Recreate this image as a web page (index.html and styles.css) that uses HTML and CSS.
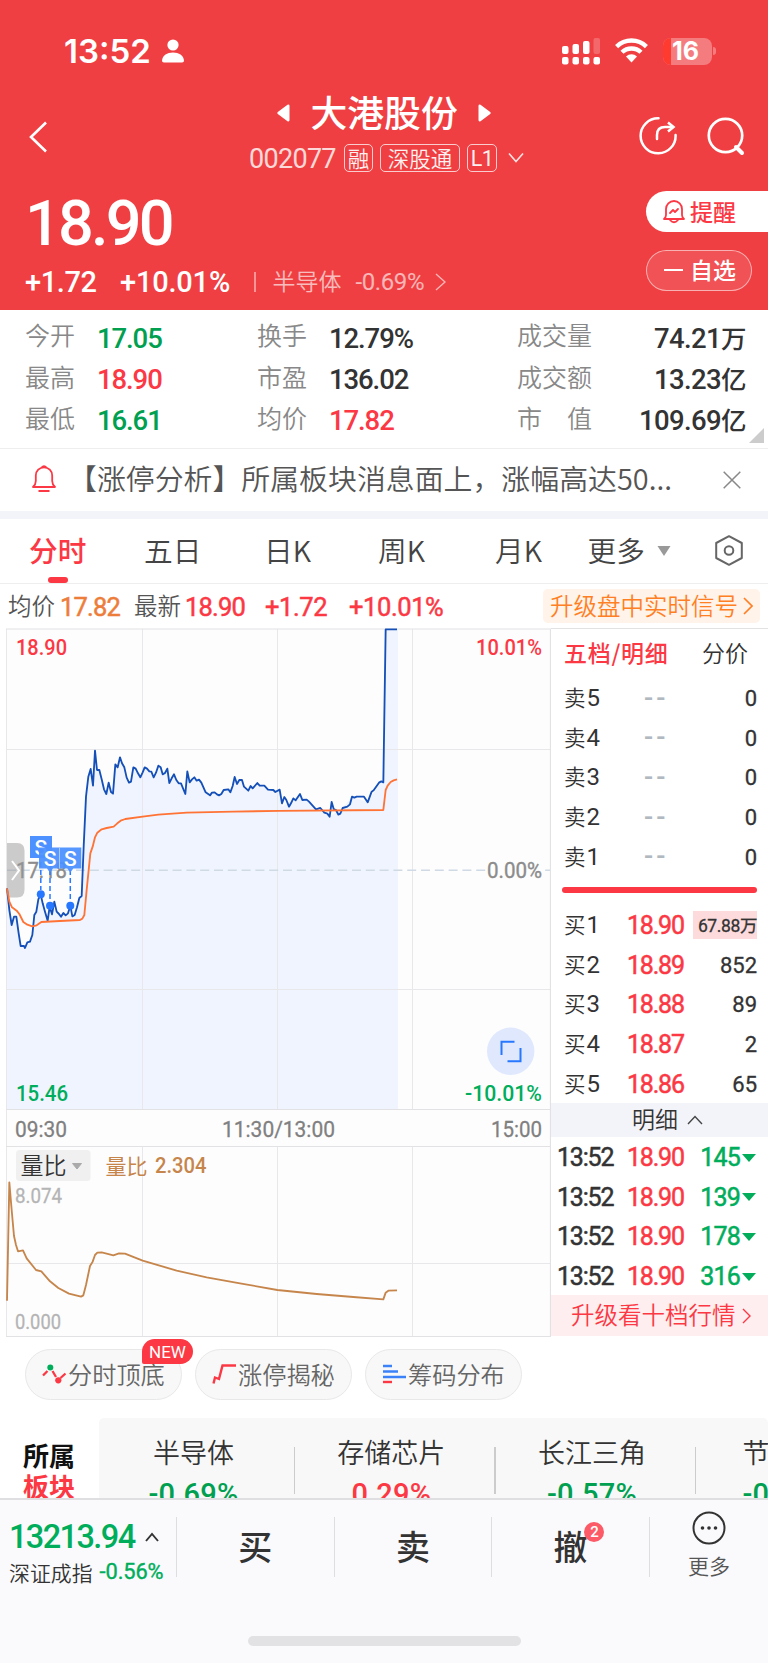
FILE: index.html
```html
<!DOCTYPE html>
<html lang="zh-CN">
<head>
<meta charset="utf-8">
<title>大港股份 002077</title>
<link rel="stylesheet" href="styles.css">
</head>
<body>
<div class="screen">
  <header class="hero">
    <div class="status">
      <span class="clock">13:52</span>
      <svg class="person" width="22" height="24" viewBox="0 0 22 24"><circle cx="11" cy="6" r="5.6"/><path d="M0 21.5C.6 16.500 5 13.600 11 13.600s10.400 2.900 11 7.900c0 1.300-.8 1.900-2 1.900H2c-1.200 0-2-.6-2-1.900z"/></svg>
      <svg class="signal" width="39" height="27" viewBox="0 0 39 27"><g fill="#fff"><rect x="0" y="8" width="6.500" height="8" rx="2"/><rect x="10.500" y="6" width="6.500" height="10" rx="2"/><rect x="21" y="3" width="6.500" height="13" rx="2"/><rect x="0" y="19" width="6.500" height="7.500" rx="2"/><rect x="10.500" y="19" width="6.500" height="7.500" rx="2"/><rect x="21" y="19" width="6.500" height="7.500" rx="2"/><rect x="31.500" y="19" width="6.500" height="7.500" rx="2"/></g><rect x="31.500" y="0" width="6.500" height="16" rx="2" fill="#fff" opacity=".22"/></svg>
      <svg class="wifi" width="33" height="25" viewBox="0 0 33 25"><g fill="none" stroke="#fff" stroke-width="4.400"><path d="M1.600 8.600a21.400 21.400 0 0 1 29.800 0"/><path d="M7 14.300a13.600 13.600 0 0 1 19 0"/></g><path d="M11 18.500a8 8 0 0 1 11 0l-5.500 6z" fill="#fff"/></svg>
      <span class="battery"><span class="battery-level"></span><span class="battery-num">16</span></span>
      <span class="battery-tip"></span>
    </div>
    <div class="nav">
      <svg class="back" width="20" height="34" viewBox="0 0 20 34"><path d="M18 2.500 3 17l15 14.500" fill="none" stroke="#fff" stroke-width="2.600"/></svg>
      <div class="title-block">
        <div class="title-row">
          <svg width="13" height="18" viewBox="0 0 13 18"><path d="M.8 8 10.500.8Q12.500 0 12.500 2v14q0 2-2 1.200L.8 10q-1-1 0-2z" fill="#fff"/></svg>
          <h1>大港股份</h1>
          <svg width="13" height="18" viewBox="0 0 13 18"><path d="M12.200 8 2.500.8Q.5 0 .5 2v14q0 2 2 1.200l9.700-7.200q1-1 0-2z" fill="#fff"/></svg>
        </div>
        <div class="code-row">
          <span class="code num">002077</span><span class="tag t1">融</span><span class="tag t2">深股通</span><span class="tag t3">L1</span>
          <svg width="16" height="12" viewBox="0 0 16 12"><path d="m1 1.500 7 8 7-8" fill="none" stroke="#fff" stroke-opacity=".85" stroke-width="1.600"/></svg>
        </div>
      </div>
      <svg class="share" width="38" height="38" viewBox="0 0 38 38"><g fill="none" stroke="#fff" stroke-width="2.500"><path d="M19.500 1.300A17.500 17.500 0 1 0 36.600 18" stroke-linecap="round"/><path d="M18 22v-4q0-8 8-8h7" stroke-linecap="round"/><path d="m29 5.500 5.500 4.500-5.500 4.500"/></g></svg>
      <svg class="search" width="38" height="40" viewBox="0 0 38 40"><circle cx="18.500" cy="18.500" r="16.700" fill="none" stroke="#fff" stroke-width="2.700"/><path d="m29 30 6 6" stroke="#fff" stroke-width="4" stroke-linecap="round"/></svg>
    </div>
    <div class="price-area">
      <div class="price-col">
        <div class="price num">18.90</div>
        <div class="change-row">
          <span class="chg num">+1.72</span><span class="pct num">+10.01%</span><i class="bar"></i><span class="industry">半导体</span><span class="ind-pct num">-0.69%</span>
          <svg width="11" height="18" viewBox="0 0 11 18"><path d="m1 1 9 8-9 8" fill="none" stroke="#fff" stroke-opacity=".62" stroke-width="1.400"/></svg>
        </div>
      </div>
      <div class="actions">
        <div class="remind"><svg width="22" height="24" viewBox="0 0 22 24"><g fill="none" stroke="#fb3844" stroke-width="1.800" stroke-linejoin="round"><path d="M1 19q2-1.600 2-4V9a8 8 0 0 1 16 0v6q0 2.400 2 4z"/><path d="M7 20q4 4.500 8 0M7 13l3-3 2 2 3-3" stroke-linecap="round"/></g></svg><span>提醒</span></div>
        <div class="watch"><i></i><span>自选</span></div>
      </div>
    </div>
  </header>

  <section class="quotes">
    <span class="lab">今开</span><b class="num down">17.05</b><span class="lab">换手</span><b class="num">12.79%</b><span class="lab">成交量</span><b class="num r">74.21<em>万</em></b>
    <span class="lab">最高</span><b class="num up">18.90</b><span class="lab">市盈</span><b class="num">136.02</b><span class="lab">成交额</span><b class="num r">13.23<em>亿</em></b>
    <span class="lab">最低</span><b class="num down">16.61</b><span class="lab">均价</span><b class="num up">17.82</b><span class="lab">市　值</span><b class="num r">109.69<em>亿</em></b>
    <i class="corner"></i>
  </section>

  <section class="news">
    <svg class="bell" width="24" height="28" viewBox="0 0 24 28"><g fill="none" stroke="#fb3844" stroke-width="1.800" stroke-linejoin="round"><path d="M1 22q2.800-2.600 2.800-6v-5.500a8.200 8.200 0 0 1 16.400 0V16q0 3.400 2.800 6z"/><path d="M9.500 2.500q2.500-2.600 5 0M6.500 26h11"/></g></svg>
    <span class="news-text">【涨停分析】所属板块消息面上，涨幅高达50...</span>
    <svg width="18" height="18" viewBox="0 0 18 18"><path d="m.7.7 16.600 16.600M17.300.7.700 17.300" stroke="#888" stroke-width="1.500"/></svg>
  </section>

  <nav class="tabs">
    <span class="tab active">分时</span><span class="tab t-5">五日</span><span class="tab t-d">日K</span><span class="tab t-w">周K</span><span class="tab t-m">月K</span><span class="tab t-more">更多</span>
    <svg class="drop" width="14" height="10" viewBox="0 0 14 10"><path d="M.5 0h13L7 10z" fill="#999"/></svg>
    <svg width="28" height="31" viewBox="0 0 28 31"><g fill="none" stroke="#666" stroke-width="2" stroke-linejoin="round"><path d="M14 1.200 26.800 8v15L14 29.800 1.200 23V8z"/><circle cx="14" cy="15.500" r="4.300"/></g></svg>
  </nav>

  <div class="strip">
    <span class="s-lab">均价</span><span class="num s-avg">17.82</span><span class="s-lab s-new">最新</span><span class="num s-last">18.90</span><span class="num s-chg">+1.72</span><span class="num s-pct">+10.01%</span>
    <span class="signal-link">升级盘中实时信号<svg width="10" height="20" viewBox="0 0 10 20"><path d="m1 2 8 8-8 8" fill="none" stroke="#ff7f24" stroke-width="1.700"/></svg></span>
  </div>

  <main class="board">
    <svg class="chart" width="551" height="709" viewBox="0 628 551 709">
      <path d="M7 629h543v708H7z" fill="#fdfdfe"/>
      <g transform="translate(0 620) scale(.33333)">
        <path class="area" d="M21 805 28 870 35 915 42 890 49 890 56 940 62 978 72 978 75 984 82 967 90 965 97 945 103 885 109 875 115 838 122 823 128 850 135 875 143 902 149 860 156 883 163 845 170 875 177 882 183 890 190 879 197 886 204 880 211 857 217 889 224 885 231 862 238 834 245 828 251 680 258 530 265 470 272 447 279 497 285 392 291 450 298 450 305 478 312 508 319 522 326 488 333 516 339 521 346 433 353 442 360 412 366 430 373 442 380 473 387 488 393 485 400 442 407 446 414 460 421 472 428 457 434 442 441 446 448 454 461 472 475 437 482 442 488 463 502 446 508 489 522 463 536 490 543 490 556 522 562 454 569 487 583 472 604 488 617 517 630 526 644 517 657 526 671 510 685 508 691 517 704 471 711 492 726 480 732 500 745 512 772 489 804 509 839 516 846 560 900 522 948 568 989 590 1028 564 1056 530 1103 547 1144 484 1150 487 1157 28H1194V1468H21z"/>
      </g>
      <g class="grid">
        <path d="M6.500 629V1337M142.500 629v480M277.500 629v480M412.500 629v480M142.500 1146v190M277.500 1146v190M412.500 1146v190"/>
        <path d="M6 749.500h544M6 989.500h544M6 1263.500h544"/>
        <path class="frame" d="M6 629h545M6 1109.500h544M6 1146.500h544M6 1336.500h544M550.500 629v708"/>
      </g>
      <path d="M7 870.300H550" stroke="#d0dae4" stroke-width="1.400" stroke-dasharray="9 4.800"/>
      <rect x="486" y="860" width="57" height="20" fill="#fdfdfe"/>
      <g class="labels">
        <text class="up" x="16" y="654.500" textLength="51" lengthAdjust="spacingAndGlyphs">18.90</text>
        <text class="up" x="476" y="654.500" textLength="66" lengthAdjust="spacingAndGlyphs">10.01%</text>
        <text class="mute" x="16" y="878" textLength="51" lengthAdjust="spacingAndGlyphs">17.18</text>
        <text class="mute" x="487" y="878" textLength="55" lengthAdjust="spacingAndGlyphs">0.00%</text>
        <text class="down" x="16" y="1101" textLength="52" lengthAdjust="spacingAndGlyphs">15.46</text>
        <text class="down" x="465" y="1101" textLength="77" lengthAdjust="spacingAndGlyphs">-10.01%</text>
        <text class="time" x="15" y="1137" textLength="52" lengthAdjust="spacingAndGlyphs">09:30</text>
        <text class="time" x="222" y="1137" textLength="113" lengthAdjust="spacingAndGlyphs">11:30/13:00</text>
        <text class="time" x="491" y="1137" textLength="51" lengthAdjust="spacingAndGlyphs">15:00</text>
        <text class="scale" x="15" y="1203" textLength="47" lengthAdjust="spacingAndGlyphs">8.074</text>
        <text class="scale" x="15" y="1328.500" textLength="46" lengthAdjust="spacingAndGlyphs">0.000</text>
        <rect x="16" y="1150" width="74.500" height="31" rx="3.500" fill="#f0f0f0"/>
        <text class="ratio-name" x="20.500" y="1173.500">量比</text>
        <path d="M72.500 1163.500h9l-4.500 5.500z" fill="#aaa" stroke="#aaa"/>
        <text class="ratio-cn" x="105.500" y="1173.500">量比</text>
        <text class="ratio-val" x="155" y="1173" textLength="51.500" lengthAdjust="spacingAndGlyphs">2.304</text>
      </g>
      <path d="M7 843h10q7.500 0 7.500 7.500v39q0 8-7.500 8H7z" fill="#999" fill-opacity=".5"/>
      <path d="m12 861 7 9.500-7 9.500" fill="none" stroke="#fff" stroke-width="2"/>
      <g transform="translate(0 620) scale(.33333)">
        <path class="line price-line" d="M21 805 28 870 35 915 42 890 49 890 56 940 62 978 72 978 75 984 82 967 90 965 97 945 103 885 109 875 115 838 122 823 128 850 135 875 143 902 149 860 156 883 163 845 170 875 177 882 183 890 190 879 197 886 204 880 211 857 217 889 224 885 231 862 238 834 245 828 251 680 258 530 265 470 272 447 279 497 285 392 291 450 298 450 305 478 312 508 319 522 326 488 333 516 339 521 346 433 353 442 360 412 366 430 373 442 380 473 387 488 393 485 400 442 407 446 414 460 421 472 428 457 434 442 441 446 448 454 454 455 461 472 468 458 475 437 482 442 488 463 495 459 502 446 508 489 515 475 522 463 529 480 536 490 543 490 556 522 562 454 569 487 576 478 583 472 590 482 597 479 604 488 617 517 630 526 636 518 644 517 651 523 657 526 664 522 671 510 685 508 691 517 698 498 704 471 711 492 718 480 726 480 732 500 745 512 752 498 758 505 772 489 779 497 793 497 804 509 820 510 826 516 839 509 846 550 853 531 859 540 867 560 873 550 880 535 887 541 900 522 907 540 920 539 927 545 948 568 961 564 973 578 982 581 989 590 995 546 1001 567 1008 570 1015 584 1021 581 1028 564 1042 560 1050 553 1056 530 1063 533 1070 530 1092 530 1103 547 1115 515 1121 511 1137 488 1144 484 1150 487 1157 28 1191 28"/>
        <path class="line avg-line" d="M21 805 28 845 36 862 50 872 58 882 70 906 82 914 97 919 110 916 124 906 180 903 240 900 247 896 253 885 260 810 265 760 271 700 278 680 285 652 292 638 305 628 320 624 341 620 352 610 362 602 376 597 428 590 475 584 560 578 700 575 838 572.500 1150 570 1157 510 1163 497 1172 486 1181 481 1191 478"/>
      </g>
      <g class="marks">
        <path d="M40.800 862v28M50 870v32M70.300 870v32" stroke="#2878ff" stroke-width="1.500" stroke-dasharray="5 3"/>
        <path d="M30 836h22v22H30z" fill="#4d90ff"/><text x="34.400" y="854.500">S</text>
        <g fill="#4d90ff" fill-opacity=".95"><path d="M39 847.500h22v21h-8l-3 4-3-4h-8zM59.800 847.500h21.500v21h-8l-3 4-3-4h-7.500z"/><path d="M59.500 847.500v21" stroke="#a8c8ff"/></g>
        <text x="43.800" y="865.500">S</text><text x="64" y="865.500">S</text>
        <g fill="#2878ff"><circle cx="40.800" cy="894.300" r="4"/><circle cx="50" cy="905.700" r="4"/><circle cx="70.300" cy="905.700" r="4"/></g>
      </g>
      <circle cx="510.700" cy="1051.300" r="23.700" fill="#dfe8fd"/>
      <path d="M501.500 1055v-13.200H514.500M520.500 1048v13.200H507.500" fill="none" stroke="#2878ff" stroke-width="2"/>
      <g transform="translate(0 950) scale(.33333)">
        <path class="line ratio-line" d="M21 1052 28 697 35 780 42 858 48 885 54 904 69 901 80 925 108 960 124 964 150 994 175 1014 207 1031 243 1040 250 1036 258 1005 270 948 278 935 285 915 292 908 305 907 320 911 340 916 357 910 375 911 428 932 530 962 620 982 720 1000 832 1020 950 1032 1060 1041 1150 1048 1157 1028 1165 1022 1191 1021"/>
      </g>
    </svg>

    <aside class="depth">
      <div class="depth-head"><b>五档/明细</b><span>分价</span></div>
      <div class="row sell"><span>卖<i>5</i></span><span class="dash">--</span><b class="num">0</b></div>
      <div class="row sell"><span>卖<i>4</i></span><span class="dash">--</span><b class="num">0</b></div>
      <div class="row sell"><span>卖<i>3</i></span><span class="dash">--</span><b class="num">0</b></div>
      <div class="row sell"><span>卖<i>2</i></span><span class="dash">--</span><b class="num">0</b></div>
      <div class="row sell"><span>卖<i>1</i></span><span class="dash">--</span><b class="num">0</b></div>
      <div class="split"></div>
      <div class="row"><span>买<i>1</i></span><span class="num up">18.90</span><b class="num big">67.88万</b></div>
      <div class="row"><span>买<i>2</i></span><span class="num up">18.89</span><b class="num">852</b></div>
      <div class="row"><span>买<i>3</i></span><span class="num up">18.88</span><b class="num">89</b></div>
      <div class="row"><span>买<i>4</i></span><span class="num up">18.87</span><b class="num">2</b></div>
      <div class="row"><span>买<i>5</i></span><span class="num up">18.86</span><b class="num">65</b></div>
      <div class="detail-bar">明细<svg width="16" height="10" viewBox="0 0 16 10"><path d="m1 9 7-7.500L15 9" fill="none" stroke="#444" stroke-width="1.400"/></svg></div>
      <div class="tick num"><span>13:52</span><span class="up">18.90</span><b>145</b><i></i></div>
      <div class="tick num"><span>13:52</span><span class="up">18.90</span><b>139</b><i></i></div>
      <div class="tick num"><span>13:52</span><span class="up">18.90</span><b>178</b><i></i></div>
      <div class="tick num"><span>13:52</span><span class="up">18.90</span><b>316</b><i></i></div>
      <div class="upgrade">升级看十档行情<svg width="9" height="18" viewBox="0 0 9 18"><path d="m1 2 7 7-7 7" fill="none" stroke="#fb3844" stroke-width="1.400"/></svg></div>
    </aside>
  </main>

  <div class="chips">
    <div class="chip"><svg width="24" height="20" viewBox="0 0 24 20"><path d="m1 11.500 4.500-4.500M10.500 7l3.500 6M18.500 14l5-4.500" fill="none" stroke="#fb3844" stroke-width="2.300"/><circle cx="8.300" cy="3.500" r="3" fill="#00ad5b"/><circle cx="16.300" cy="16.300" r="3.100" fill="#fb3844"/></svg>分时顶底<span class="new">NEW</span></div>
    <div class="chip"><svg width="24" height="20" viewBox="0 0 24 20"><path d="M1.500 19.500 3 13.500l4 1.500L10.500 1.500H24" fill="none" stroke="#fb3844" stroke-width="2.400"/></svg>涨停揭秘</div>
    <div class="chip"><svg width="24" height="20" viewBox="0 0 24 20"><path d="M1 2h9M1 7.500h15M1 13h23" stroke="#3b82f8" stroke-width="2.400"/><path d="M1 18h9" stroke="#fb3844" stroke-width="2.400"/></svg>筹码分布</div>
  </div>

  <section class="sectors">
    <div class="sector-name">所属<br><em>板块</em></div>
    <div class="sector-list">
      <div class="sector">半导体<b class="num down">-0.69%</b></div>
      <div class="sector">存储芯片<b class="num up">0.29%</b></div>
      <div class="sector">长江三角<b class="num down">-0.57%</b></div>
      <div class="sector last">节能环保<b class="num down">-0.48%</b></div>
    </div>
  </section>

  <footer class="footer">
    <div class="footer-row">
      <div class="index">
        <div class="index-val num">13213.94<svg width="14" height="10" viewBox="0 0 14 10"><path d="m1 9 6-7 6 7" fill="none" stroke="#333" stroke-width="1.900"/></svg></div>
        <div class="index-name">深证成指<span class="num">-0.56%</span></div>
      </div>
      <div class="trade">买</div>
      <div class="trade">卖</div>
      <div class="trade"><span class="cancel">撤<i>2</i></span></div>
      <div class="more"><svg width="34" height="34" viewBox="0 0 34 34"><circle cx="17" cy="17" r="15.500" fill="none" stroke="#333" stroke-width="2"/><g fill="#333"><circle cx="10.500" cy="17" r="1.800"/><circle cx="17" cy="17" r="1.800"/><circle cx="23.500" cy="17" r="1.800"/></g></svg>更多</div>
    </div>
    <div class="home"></div>
  </footer>
</div>
</body>
</html>
```
FILE: styles.css
```css
* { box-sizing: border-box; margin: 0; padding: 0; }
body { width: 768px; background: #fff; font-family: "Noto Sans CJK SC", sans-serif; font-weight: 350; color: #333; }
.screen { width: 768px; height: 1663px; overflow: hidden; display: flex; flex-direction: column; }
.screen > * { flex: none; }
svg { display: block; flex: none; }
i, em { font-style: normal; }
.num { font-family: Roboto, "Noto Sans CJK SC", sans-serif; font-weight: 500; letter-spacing: -.4px; white-space: nowrap; }
.up { color: #fb3844; fill: #fb3844; }
.down { color: #00a050; fill: #00ad5b; }

/* header */
.hero { height: 309.5px; background: #f03f42; color: #fff; }
.status { height: 86px; padding: 36px 0 0 64px; display: flex; align-items: flex-start; }
.clock { width: 98px; font: 600 33px/31px Inter, sans-serif; letter-spacing: 0; }
.person { fill: #fff; margin-top: 3px; }
.signal { margin: 2px 0 0 378px; }
.wifi { margin: 2px 0 0 14px; }
.battery { position: relative; width: 49px; height: 27px; margin: 1.500px 0 0 14.500px; border-radius: 8px; background: rgba(255,255,255,.32); overflow: hidden; }
.battery-level { display: block; width: 8px; height: 27px; background: #ff3b30; }
.battery-num { position: absolute; left: 9.500px; top: 0; font: 700 25px/27px Inter, sans-serif; letter-spacing: 0; }
.battery-tip { width: 3px; height: 8px; margin: 11px 0 0 1.500px; border-radius: 0 3px 3px 0; background: rgba(255,255,255,.32); }
.nav { height: 97px; display: flex; }
.back { margin: 34px 0 0 28px; }
.title-block { width: 290px; margin-left: 201px; }
.title-row { height: 54px; display: flex; align-items: center; padding-left: 28px; }
.title-row h1 { width: 147px; margin: -5px 20.500px 0; font-size: 36.800px; line-height: 54px; font-weight: 500; white-space: nowrap; }
.code-row { display: flex; align-items: center; height: 36px; }
.code { width: 95px; font-size: 27px; font-weight: 400; opacity: .8; letter-spacing: -.7px; padding-top: 2px; }
.tag { height: 28.500px; border: 1px solid rgba(255,255,255,.8); border-radius: 5px; font-size: 21.500px; line-height: 25px; text-align: center; white-space: nowrap; opacity: .92; }
.t1 { width: 29px; }
.t2 { width: 80px; margin: 0 7px; }
.t3 { width: 30px; margin-right: 11px; font-family: Roboto, sans-serif; font-weight: 400; letter-spacing: -.5px; line-height: 27px; }
.share { margin: 31px 0 0 100px; }
.search { margin: 31px 0 0 29.500px; }
.price-area { display: flex; justify-content: space-between; }
.price-col { padding-left: 25px; }
.price { height: 83.500px; font-size: 63px; line-height: 82px; letter-spacing: -2.800px; }
.change-row { display: flex; align-items: center; height: 30px; font-size: 29px; }
.chg { width: 95px; }
.pct { width: 134px; letter-spacing: -.2px; }
.bar { width: 1.500px; height: 20px; background: rgba(255,255,255,.45); }
.industry { width: 83px; margin: -3px 0 0 17px; font-size: 23px; opacity: .65; }
.ind-pct { width: 79px; font-size: 24px; font-weight: 400; opacity: .62; }
.actions { width: 122px; padding-top: 8px; }
.remind { height: 41px; border-radius: 21px 0 0 21px; background: #fff; color: #fb3844; display: flex; align-items: center; gap: 5px; padding-left: 17px; font-size: 23px; font-weight: 500; }
.actions span { margin-top: -2px; }
.watch { width: 106px; height: 41px; margin-top: 17.500px; border: 1px solid rgba(255,255,255,.55); border-radius: 21px; background: rgba(255,255,255,.1); display: flex; align-items: center; gap: 7px; padding-left: 17px; font-size: 23px; font-weight: 500; }
.watch i { width: 19px; height: 2px; background: #fff; }

/* quote grid */
.quotes { position: relative; height: 139px; padding: 7px 22px 0 25px; display: grid; grid-template-columns: 72px 160px 72px 188px 80px 149px; grid-template-rows: repeat(3, 41.400px); align-items: center; border-bottom: 1.500px solid #eee; }
.lab { font-size: 25px; line-height: 40px; color: #888; white-space: nowrap; margin-top: -6px; }
.quotes b { font-size: 27.500px; margin-top: 3px; line-height: 36px; letter-spacing: -1.100px; }
.quotes .r { letter-spacing: -.6px; }
.quotes em { font-size: 25.500px; font-weight: 500; line-height: 30px; }
.r { text-align: right; }
.corner { position: absolute; right: 4px; top: 118px; border-left: 15px solid transparent; border-bottom: 15px solid #ccc; }
.news { height: 62px; display: flex; align-items: center; padding-left: 32px; }
.news-text { width: 640px; margin: -5px 28px 0 -1px; font-size: 28.900px; line-height: 50px; color: #555; white-space: nowrap; overflow: hidden; padding-left: 13px; }
.bell { margin-top: -1px; }
.tabs { height: 73.500px; border-top: 8px solid #f3f4fa; border-bottom: 1.500px solid #eee; display: flex; align-items: center; padding-left: 29px; font-size: 28.700px; color: #444; white-space: nowrap; }
.tab { width: 115px; line-height: 62px; height: 64px; position: relative; }
.active { color: #fb3844; font-weight: 500; }
.active::after { content: ""; position: absolute; left: 18.500px; bottom: 0; width: 20.500px; height: 6px; border-radius: 3px; background: #fb3844; }
.t-5 { width: 120px; }
.t-d { width: 114px; }
.t-w { width: 117px; }
.t-m { width: 92.500px; }
.t-more { width: 69px; }
.drop { margin-right: 44px; }
.strip { height: 44px; display: flex; align-items: center; padding-left: 8px; }
.s-lab { width: 52px; font-size: 23.500px; line-height: 34px; color: #555; margin-top: -2px; }
.strip .num { font-size: 25.500px; font-weight: 400; -webkit-text-stroke: .5px; color: #fb3844; margin-top: 2px; }
.strip .s-avg { width: 74px; color: #ed7d3a; letter-spacing: -.8px; }
.s-new { width: 51px; }
.strip .s-last { width: 80px; letter-spacing: -.8px; }
.strip .s-chg { width: 84px; }
.strip .s-pct { width: 194px; }
.signal-link { height: 34px; width: 217px; border-radius: 5px; background: #fff3ea; color: #ff7f24; display: flex; align-items: center; justify-content: space-between; padding: 0 7px 3px; font-size: 23.500px; white-space: nowrap; }
.signal-link svg { margin-top: 2px; }

/* chart */
.board { height: 709px; display: flex; }
.chart { width: 551px; height: 709px; }
.area { fill: #eff4ff; }
.grid path { fill: none; stroke: #e8e8ea; stroke-width: 1; }
.grid .frame { stroke: #e2e2e4; stroke-width: 1.200; }
.line { fill: none; stroke-linejoin: round; }
.price-line { stroke: #1450b8; stroke-width: 5.500px; }
.avg-line { stroke: #ff7335; stroke-width: 5.500px; }
.ratio-line { stroke: #c6854b; stroke-width: 5.500px; }
.labels text { font-family: Roboto, sans-serif; font-size: 22.500px; font-weight: 500; }
.labels .mute { fill: #8c8c8c; font-weight: 400; stroke: #8c8c8c; stroke-width: .4px; }
.labels .time { fill: #808080; font-weight: 400; stroke: #808080; stroke-width: .3px; }
.labels .scale { fill: #b4b4b4; font-size: 20.500px; font-weight: 400; stroke: #b4b4b4; stroke-width: .3px; }
.labels .ratio-name { font: 350 23px "Noto Sans CJK SC", sans-serif; fill: #333; }
.labels .ratio-cn { font: 400 21px "Noto Sans CJK SC", sans-serif; fill: #c6854b; }
.labels .ratio-val { fill: #c6854b; font-size: 21.500px; }
.marks text { fill: #fff; font: 500 21px Roboto, sans-serif; }

/* order book */
.depth { width: 217px; border-top: 1.500px solid #e2e2e4; }
.depth-head { height: 49px; padding: 0 0 4px 13px; display: flex; align-items: center; font-size: 23px; white-space: nowrap; }
.depth-head b { width: 138px; color: #fb3844; font-weight: 500; letter-spacing: .7px; }
.row { height: 39.600px; display: grid; grid-template-columns: 62px 70px 61px; align-items: center; padding-left: 13px; font-size: 21.500px; line-height: 32px; }
.row i { font-family: Roboto, sans-serif; font-size: 24px; font-weight: 400; margin-left: 1px; }
.row .num { margin-top: 3px; }
.row .up { font-size: 25px; font-weight: 400; -webkit-text-stroke: .5px; letter-spacing: -1.200px; padding-left: 1px; }
.row b { text-align: right; font-size: 22px; font-weight: 400; -webkit-text-stroke: .3px; letter-spacing: 0; }
.dash { color: #b0b8c0; font: 500 27px/32px Roboto, sans-serif; padding-left: 18px; letter-spacing: 3px; }
.row .big { width: 64px; height: 28px; justify-self: end; background: #fddbdd; font-size: 17.500px; line-height: 31px; letter-spacing: -.4px; margin-top: 0; overflow: hidden; }
.split { width: 195px; height: 6.500px; margin: 11px 0 11.500px 11px; border-radius: 3px; background: #fb3844; }
.detail-bar { height: 34px; background: #f3f4fa; display: flex; align-items: center; justify-content: center; gap: 9px; padding-left: 16px; font-size: 23px; padding-bottom: 3px; }
.detail-bar svg { margin-top: 3px; }
.tick { height: 39.600px; display: grid; grid-template-columns: 69px 62px 52px 14px; align-items: center; padding: 2px 0 0 6px; font-size: 25px; font-weight: 400; -webkit-text-stroke: .5px; letter-spacing: -1.200px; }
.tick .up { padding-left: 1px; }
.tick b { text-align: right; color: #00ad5b; font-weight: 400; letter-spacing: -.8px; }
.tick i { margin-left: 2px; border: 7px solid transparent; border-top: 8px solid #00ad5b; border-bottom: 0; }
.upgrade { height: 41px; background: #feeeef; color: #fb3844; display: flex; align-items: center; gap: 6px; padding: 0 0 3px 20px; font-size: 23.500px; white-space: nowrap; }
.upgrade svg { margin-top: 3px; }

/* shortcuts */
.chips { height: 81px; padding: 12px 0 0 25px; display: flex; gap: 13px; }
.chip { position: relative; width: 157px; height: 51px; border: 1px solid #e8e8e8; border-radius: 26px; background: #f8f8f8; display: flex; align-items: center; gap: 2.500px; padding: 0 0 2px 15.500px; font-size: 24.200px; color: #666; white-space: nowrap; }
.new { position: absolute; left: 116px; top: -11px; width: 51px; height: 25px; border-radius: 13px 13px 13px 2px; background: #fb3844; color: #fff; font: 400 17px/27px Roboto, sans-serif; text-align: center; }
.sectors { height: 79.500px; display: flex; overflow: hidden; }
.sector-name { width: 99px; padding: 21px 0 0 23px; font-size: 26px; line-height: 31px; font-weight: 700; color: #111; }
.sector-name em { color: #fb3844; }
.sector-list { width: 669px; display: flex; background: #f8f8f8; border-radius: 5px 5px 0 0; padding-left: 1px; }
.sector { position: relative; flex: none; width: 200.700px; padding: 14px 8px 0 0; text-align: center; font-size: 27px; line-height: 40px; white-space: nowrap; }
.sector:first-child { width: 195px; }
.sector b { display: block; font-size: 29px; line-height: 38px; letter-spacing: .2px; margin-top: 3px; }
.sector::after { content: ""; position: absolute; right: 0; top: 29px; width: 1.500px; height: 47px; background: #ccc; }
.sector.last { text-align: left; padding-left: 46px; }

/* footer */
.footer { height: 165px; border-top: 2px solid #dfdfe2; background: #fafafc; }
.footer-row { display: flex; height: 118px; }
.index { width: 176px; padding: 18px 0 0 9px; }
.index-val { color: #00ad5b; font-size: 32.500px; line-height: 38px; display: flex; align-items: center; gap: 10px; letter-spacing: -1.600px; }
.index-name { display: flex; align-items: center; font-size: 20.900px; line-height: 32px; white-space: nowrap; }
.index-name .num { color: #00ad5b; font-size: 21.800px; font-weight: 400; -webkit-text-stroke: .4px; margin-left: 7px; letter-spacing: -.1px; }
.trade { width: 157.600px; height: 60px; margin-top: 17px; border-left: 1px solid #dedee0; font-size: 34px; line-height: 58px; font-weight: 500; text-align: center; }
.cancel { position: relative; }
.cancel i { position: absolute; right: -17px; top: 1px; width: 20px; height: 20px; border-radius: 50%; background: #fb5a66; color: #fff; font: 500 15px/21px Roboto, sans-serif; text-align: center; }
.more { flex: 1; height: 60px; margin-top: 17px; border-left: 1px solid #dedee0; display: flex; flex-direction: column; align-items: center; font-size: 21px; line-height: 32px; color: #555; }
.more svg { margin: -6px 0 4px; }
.home { width: 273px; height: 10px; margin: 18.500px auto 0; border-radius: 5px; background: #e2e2e4; }
```
